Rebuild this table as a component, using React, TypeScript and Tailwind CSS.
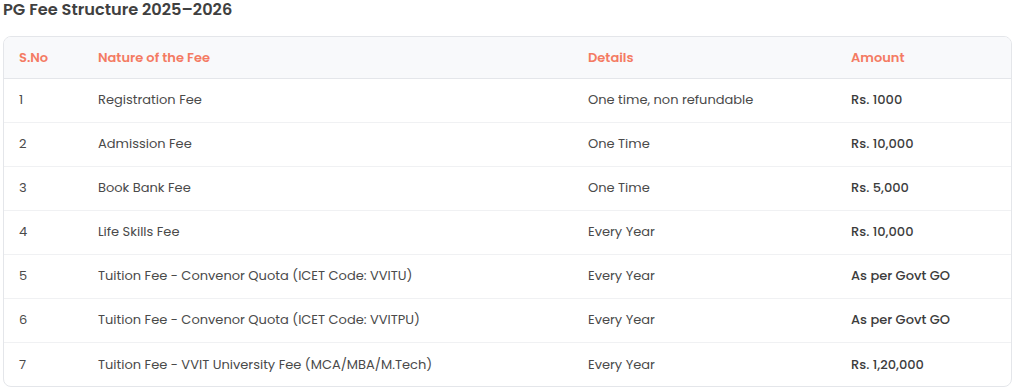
const rows = [
  ["1", "Registration Fee", "One time, non refundable", "Rs. 1000"],
  ["2", "Admission Fee", "One Time", "Rs. 10,000"],
  ["3", "Book Bank Fee", "One Time", "Rs. 5,000"],
  ["4", "Life Skills Fee", "Every Year", "Rs. 10,000"],
  ["5", "Tuition Fee - Convenor Quota (ICET Code: VVITU)", "Every Year", "As per Govt GO"],
  ["6", "Tuition Fee - Convenor Quota (ICET Code: VVITPU)", "Every Year", "As per Govt GO"],
  ["7", "Tuition Fee - VVIT University Fee (MCA/MBA/M.Tech)", "Every Year", "Rs. 1,20,000"],
];

export default function App() {
  return (
    <div className="bg-white px-[3px] font-['Poppins','Open_Sans',sans-serif] text-[#4a4a4a]">
      <h2 className="h-[20px] text-[16.2px] leading-[20px] font-semibold text-[#404040]">
        PG Fee Structure 2025–2026
      </h2>
      <div className="mt-[16px] w-[1009px] rounded-lg border border-[#e4e6ea] overflow-hidden">
        <table className="w-full border-collapse text-left text-[13px]">
          <thead>
            <tr className="bg-[#f8f9fb] h-[41px] border-b border-[#e4e6ea]">
              <th className="w-[79px] pl-[15px] font-semibold text-[#f47b63]">S.No</th>
              <th className="w-[490px] pl-[15px] font-semibold text-[#f47b63]">Nature of the Fee</th>
              <th className="w-[263px] pl-[15px] font-semibold text-[#f47b63]">Details</th>
              <th className="pl-[15px] font-semibold text-[#f47b63]">Amount</th>
            </tr>
          </thead>
          <tbody>
            {rows.map((r, i) => (
              <tr
                key={r[0]}
                className={i < rows.length - 1 ? "h-[44px] border-b border-[#f0f1f3]" : "h-[44px]"}
              >
                <td className="pl-[15px]">{r[0]}</td>
                <td className="pl-[15px]">{r[1]}</td>
                <td className="pl-[15px]">{r[2]}</td>
                <td className="pl-[15px] font-medium text-[#3c3c3c]">{r[3]}</td>
              </tr>
            ))}
          </tbody>
        </table>
      </div>
    </div>
  );
}
